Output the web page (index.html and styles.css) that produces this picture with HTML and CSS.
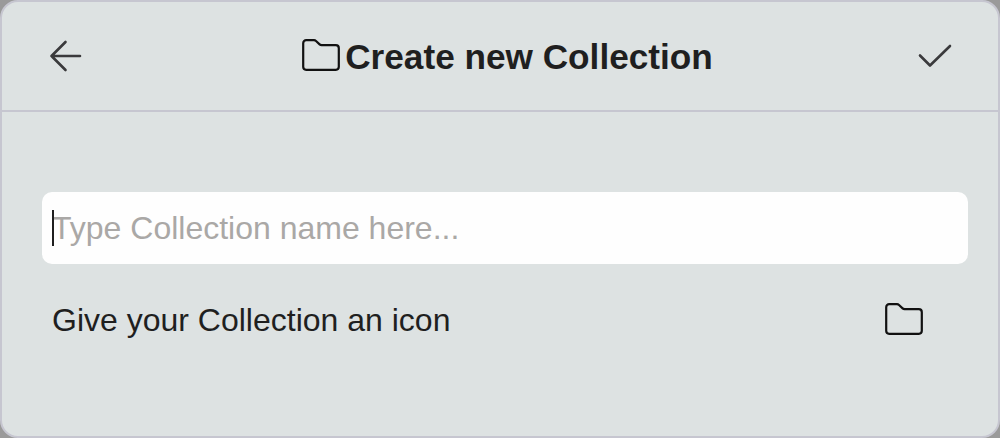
FILE: index.html

```html
<!DOCTYPE html>
<html lang="en">
<head>
  <meta charset="UTF-8" />
  <meta name="viewport" content="width=device-width, initial-scale=1.0" />
  <title>Create new Collection</title>
  <link rel="stylesheet" href="styles.css">
</head>
<body>
  <div class="panel">
    <header class="top-bar">
      <button class="icon-btn" aria-label="Back">
        <svg width="36" height="36" viewBox="0 0 36 36" fill="none" stroke="#3a3a3c" stroke-width="2.6" stroke-linecap="round" stroke-linejoin="round">
          <path d="M32 18H3.5M17.5 4L3.5 18l14 14" />
        </svg>
      </button>
      <h1 class="title">
        <svg class="folder" width="38" height="32" viewBox="0 0 38 32" fill="none" stroke="#111" stroke-width="2.2" stroke-linejoin="round">
          <path d="M1.2 4.2a3 3 0 0 1 3-3H12a3 3 0 0 1 2 .8l3.6 3.4a3 3 0 0 0 2 .8h14.2a3 3 0 0 1 3 3v18.6a3 3 0 0 1-3 3H4.2a3 3 0 0 1-3-3z" />
        </svg>
        <span class="title-text">Create new Collection</span>
      </h1>
      <button class="icon-btn" aria-label="Save">
        <svg width="36" height="36" viewBox="0 0 36 36" fill="none" stroke="#3a3a3c" stroke-width="2.6" stroke-linecap="round" stroke-linejoin="round">
          <path d="M2 17.5l10 10L32 8" />
        </svg>
      </button>
    </header>
    <div class="content">
      <div class="name-field">
        <span class="caret"></span>
        <input type="text" placeholder="Type Collection name here..." />
      </div>
      <div class="icon-row">
        <span>Give your Collection an icon</span>
        <svg class="folder" width="38" height="32" viewBox="0 0 38 32" fill="none" stroke="#111" stroke-width="2.2" stroke-linejoin="round">
          <path d="M1.2 4.2a3 3 0 0 1 3-3H12a3 3 0 0 1 2 .8l3.6 3.4a3 3 0 0 0 2 .8h14.2a3 3 0 0 1 3 3v18.6a3 3 0 0 1-3 3H4.2a3 3 0 0 1-3-3z" />
        </svg>
      </div>
    </div>
  </div>
</body>
</html>
```

FILE: styles.css

```css
html, body {
  margin: 0;
  height: 100%;
  background: #9a9a9a;
}
body {
  font-family: "Liberation Sans", Arial, sans-serif;
  color: #1f1f1f;
}
.panel {
  box-sizing: border-box;
  height: 438px;
  background: #dde2e2;
  border: 2px solid #c6c6d0;
  border-radius: 18px;
}
.top-bar {
  display: flex;
  justify-content: space-between;
  align-items: center;
  height: 108px;
  padding: 0 44px 0 46px;
  border-bottom: 2px solid #c6c6d0;
}
.icon-btn {
  display: flex;
  padding: 0;
  border: none;
  background: none;
}
.title {
  display: flex;
  align-items: center;
  gap: 5px;
  margin: 0 0 0 13px;
  font-size: 35.2px;
  font-weight: bold;
  line-height: 1;
}
.title-text {
  padding-top: 2px;
}
.folder {
  margin-bottom: 2px;
}
.content {
  padding: 80px 30px 0 40px;
}
.name-field {
  position: relative;
  height: 72px;
  background: #fefefe;
  border-radius: 10px;
}
.name-field input {
  box-sizing: border-box;
  width: 100%;
  height: 100%;
  padding: 0 10px;
  border: none;
  outline: none;
  background: none;
  font-family: inherit;
  font-size: 32px;
}
.name-field input::placeholder {
  color: #aaa8a6;
}
.caret {
  position: absolute;
  left: 10px;
  top: 18px;
  width: 2px;
  height: 36px;
  background: #1f1f1f;
}
.icon-row {
  display: flex;
  justify-content: space-between;
  align-items: center;
  margin-top: 36px;
  padding: 0 45px 0 10px;
  font-size: 32px;
  line-height: 40px;
}
```
